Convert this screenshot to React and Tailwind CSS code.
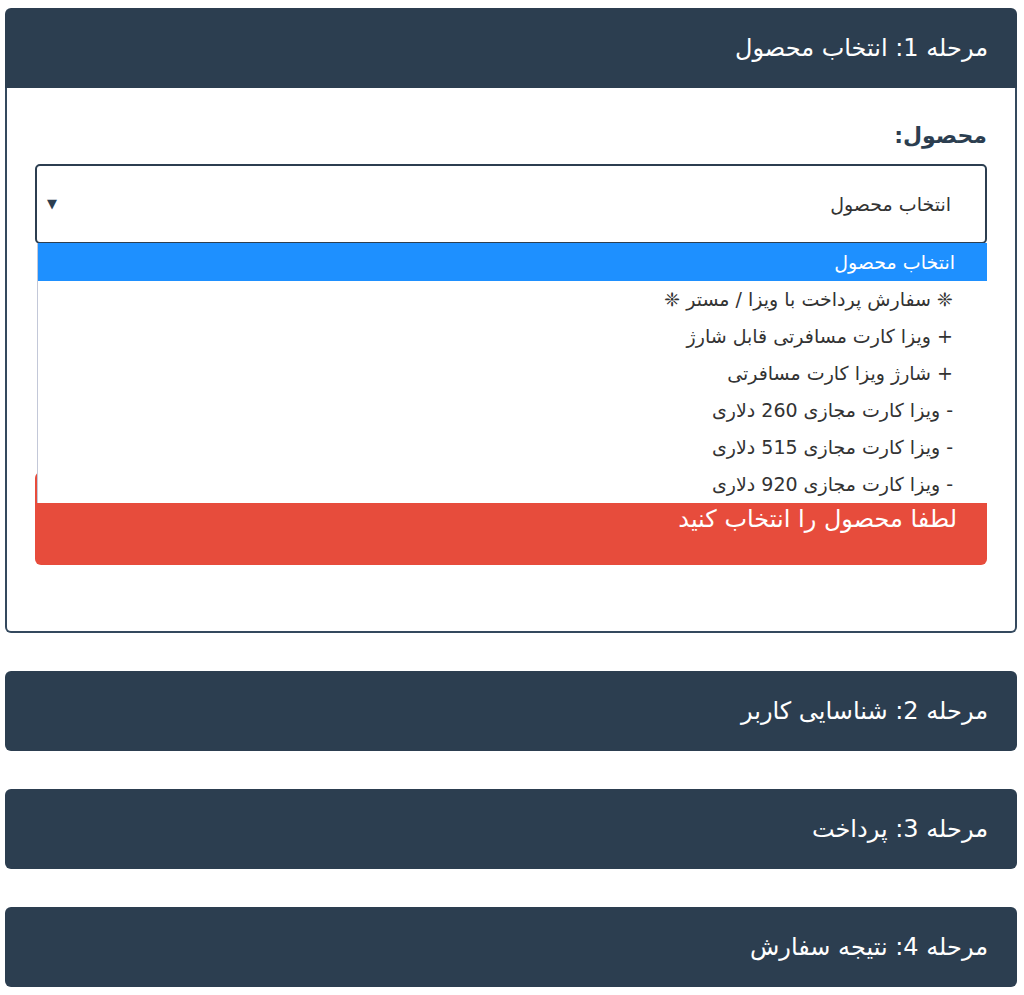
const options = [
    '❈ سفارش پرداخت با ویزا / مستر ❈',
    '+ ویزا کارت مسافرتی قابل شارژ',
    '+ شارژ ویزا کارت مسافرتی',
    '- ویزا کارت مجازی 260 دلاری',
    '- ویزا کارت مجازی 515 دلاری',
    '- ویزا کارت مجازی 920 دلاری',
];

const steps = ['مرحله 2: شناسایی کاربر', 'مرحله 3: پرداخت', 'مرحله 4: نتیجه سفارش'];

function StepHeader({ title, className = '' }) {
    return (
        <div className={`flex h-[80px] items-center bg-[#2c3e50] px-[29px] text-[24px] text-white ${className}`}>
            {title}
        </div>
    );
}

export default function App() {
    return (
        <div
            dir="rtl"
            className="flex min-h-screen flex-col gap-[38px] bg-white pt-[8px] pr-[7px] pb-[8px] pl-[5px] font-['DejaVu_Sans',sans-serif] text-[#333]"
        >
            {/* Step 1 — open */}
            <div className="rounded-[6px]">
                <StepHeader title="مرحله 1: انتخاب محصول" className="rounded-t-[6px]" />
                <div className="rounded-b-[6px] border-2 border-t-0 border-[#34495e] px-[28px] pt-[31px] pb-[66px]">
                    <label className="block text-[22px] font-bold text-[#2c3e50]">محصول:</label>

                    <div className="relative mt-[12px]">
                        <div className="flex h-[80px] items-center justify-between rounded-[5px] border-2 border-[#2c3e50] bg-white pr-[34px] pl-[10px] text-[19px] text-[#333]">
                            <span>انتخاب محصول</span>
                            <span className="text-[13px] text-[#2c3e50]">▼</span>
                        </div>

                        {/* native dropdown popup */}
                        <ul className="absolute top-[79px] right-0 left-[2px] z-10 border-l border-[#c3c8d8] bg-white text-[19px] text-[#333]">
                            <li className="flex h-[38px] items-center bg-[#1e90ff] pr-[32px] text-white">
                                انتخاب محصول
                            </li>
                            {options.map((o) => (
                                <li key={o} className="flex h-[37px] items-center pr-[34px]">
                                    {o}
                                </li>
                            ))}
                        </ul>
                    </div>

                    <div className="mt-[228px] flex h-[93px] items-center rounded-[6px] bg-[#e74c3c] px-[30px] text-[24px] text-white">
                        لطفا محصول را انتخاب کنید
                    </div>
                </div>
            </div>

            {steps.map((s) => (
                <StepHeader key={s} title={s} className="rounded-[6px]" />
            ))}
        </div>
    );
}
